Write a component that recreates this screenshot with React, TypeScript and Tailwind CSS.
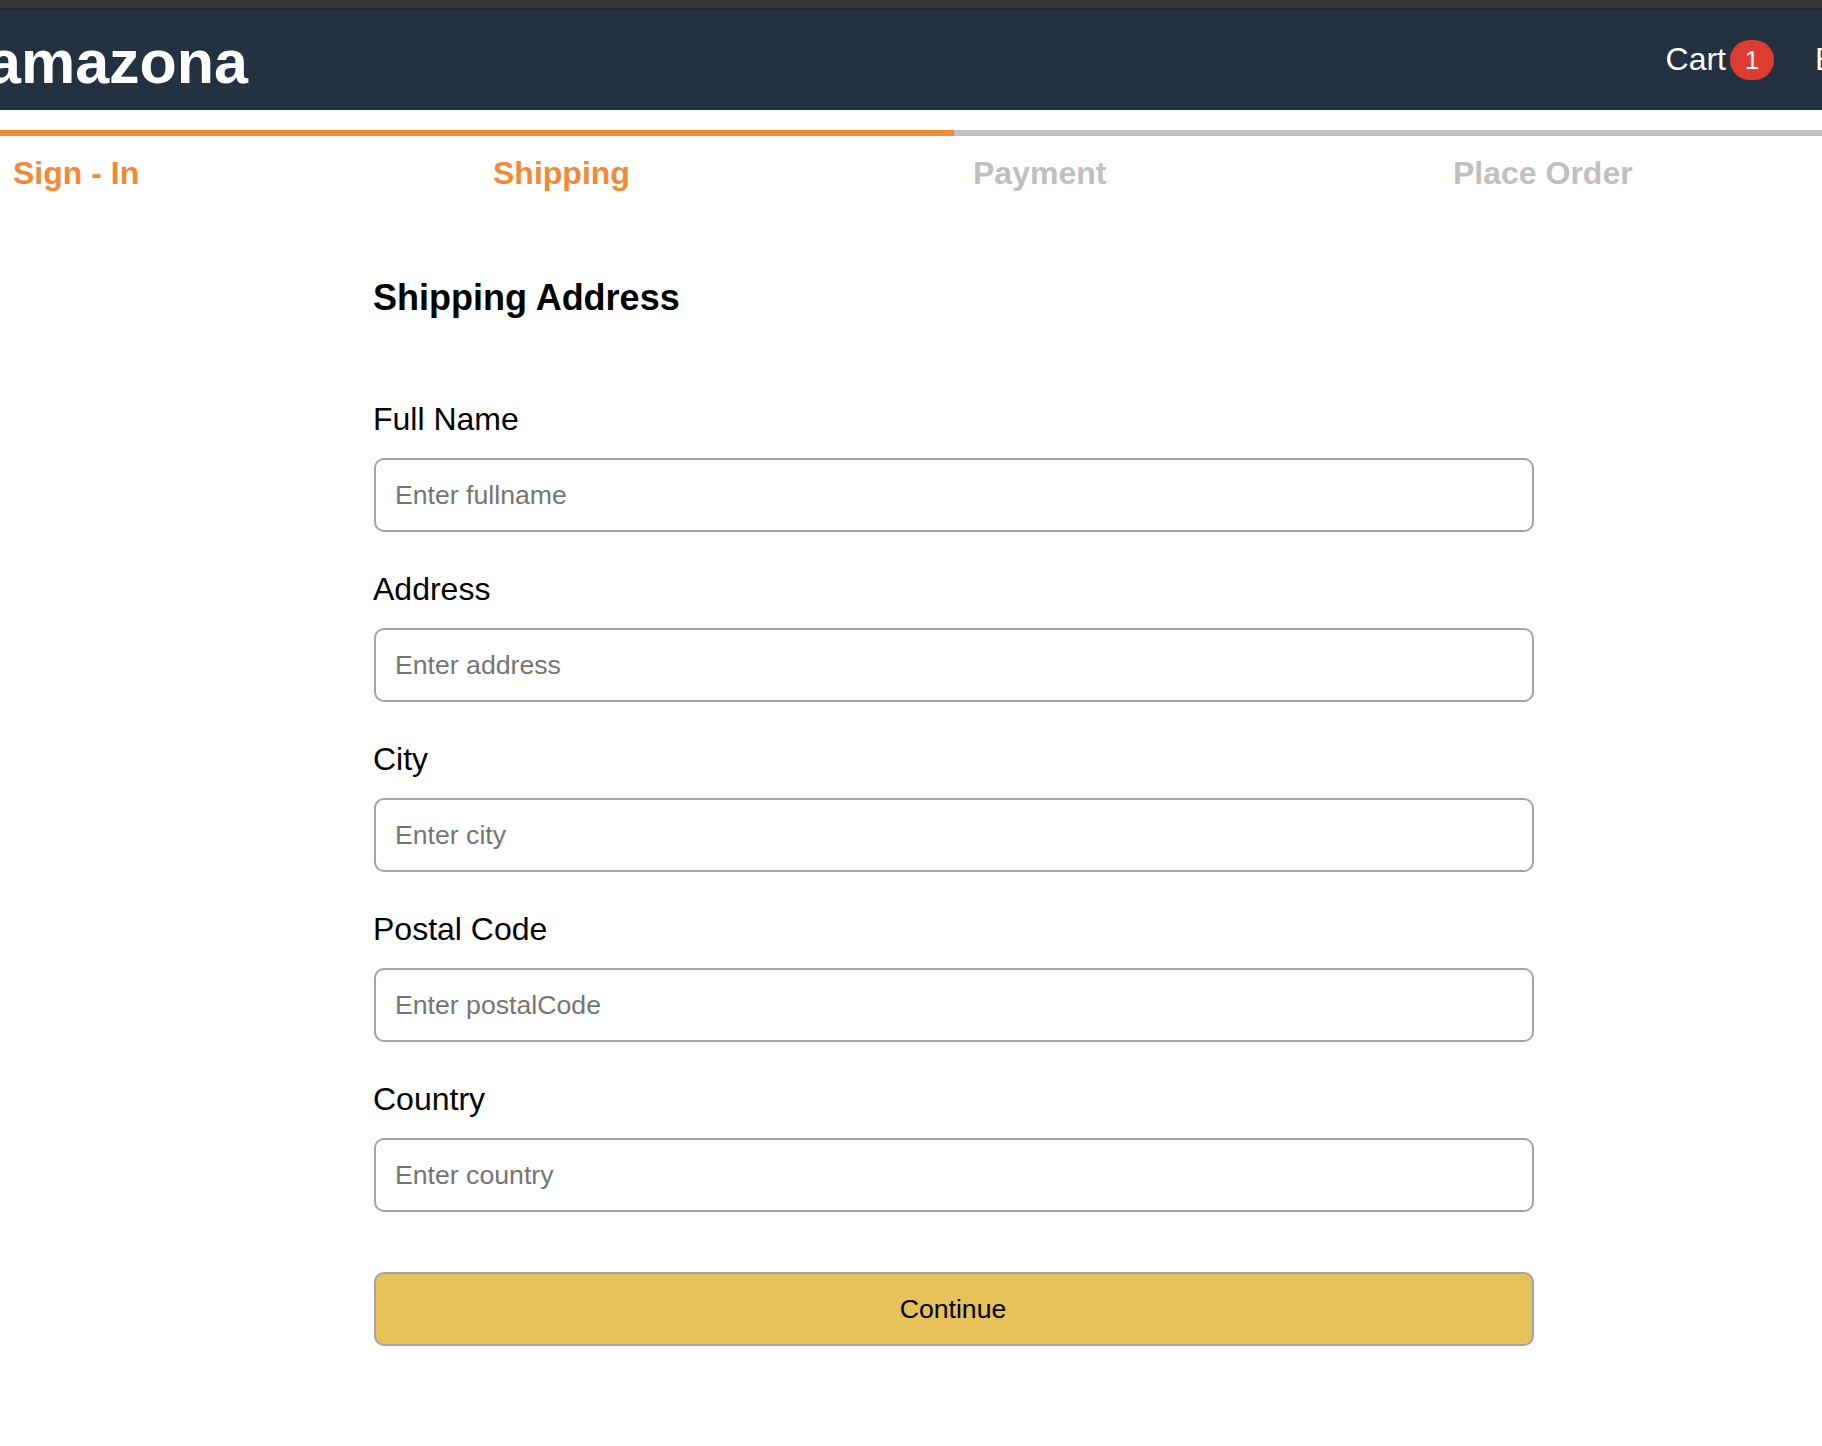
const FONT = "font-['Liberation_Sans',Arial,sans-serif]";

const steps = [
  { label: "Sign - In", active: true },
  { label: "Shipping", active: true },
  { label: "Payment", active: false },
  { label: "Place Order", active: false },
];

const fields = [
  { label: "Full Name", placeholder: "Enter fullname" },
  { label: "Address", placeholder: "Enter address" },
  { label: "City", placeholder: "Enter city" },
  { label: "Postal Code", placeholder: "Enter postalCode" },
  { label: "Country", placeholder: "Enter country" },
];

export default function App() {
  return (
    <div className={`h-[1446px] w-full overflow-hidden bg-white text-black ${FONT}`}>
      <div className="h-[8px] bg-[#353538]" />
      <div className="h-[2px] bg-[#29292b]" />
      <div className="ml-[-6px] w-[1920px]">
        <header className="flex h-[100px] items-center justify-between bg-[#243140] text-white">
          <a className="mt-[4px] ml-[-7px] text-[61px] leading-[100px] font-bold">amazona</a>
          <div className="flex items-center pr-[20px]">
            <span className="mb-[2px] text-[32px] leading-[40px]">Cart</span>
            <span className="ml-[4px] flex h-[40px] w-[44px] items-center justify-center rounded-full bg-[#de3c30] text-[26px] leading-none">
              1
            </span>
            <span className="mb-[2px] ml-[41px] w-[79px] text-[32px] leading-[40px]">Basir</span>
          </div>
        </header>

        <div className="mt-[20px] flex">
          {steps.map((s) => (
            <div
              key={s.label}
              className={`flex-1 border-t-[6px] pt-[19px] pl-[19px] text-[32px] leading-[37px] font-bold ${
                s.active ? "border-[#f18936] text-[#f18936]" : "border-[#c0c0c0] text-[#c0c0c0]"
              }`}
            >
              {s.label}
            </div>
          ))}
        </div>

        <form className="mx-auto mt-[84px] flex w-[1160px] flex-col">
          <h1 className="ml-[-1px] text-[36px] leading-[43px] font-bold">Shipping Address</h1>
          <div className="mt-[82px] flex flex-col gap-[39px]">
            {fields.map((f) => (
              <div key={f.label} className="flex flex-col gap-[21px]">
                <label className="ml-[-1px] text-[32px] leading-[36px]">{f.label}</label>
                <input
                  placeholder={f.placeholder}
                  className="h-[74px] w-full rounded-[10px] border-2 border-[#a4a4a4] bg-white px-[19px] text-[26.67px] outline-none placeholder:text-[#757575]"
                />
              </div>
            ))}
          </div>
          <button
            type="button"
            className="mt-[60px] h-[74px] w-full rounded-[10px] border-2 border-[#a4a4a4] bg-[#e6c15a] pr-[2px] text-[26.67px] text-black"
          >
            Continue
          </button>
        </form>
      </div>
    </div>
  );
}
